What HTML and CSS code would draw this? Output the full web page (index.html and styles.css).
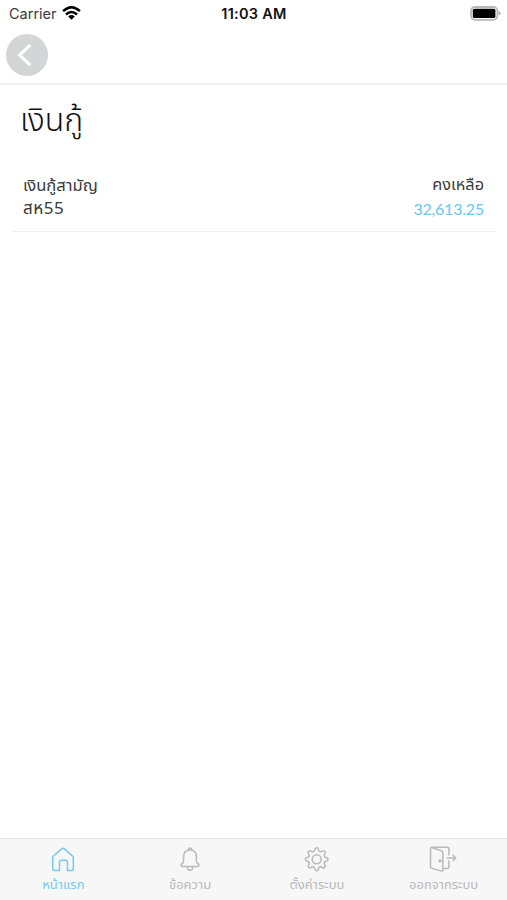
FILE: index.html
```html
<!DOCTYPE html>
<html lang="th">
<head>
<meta charset="utf-8">
<title>เงินกู้</title>
<link rel="stylesheet" href="styles.css">
</head>
<body>
<div class="app">
  <div class="status">
    <div class="carrier"><span>Carrier</span>
      <svg width="19" height="14" viewBox="0 0 19 14" fill="none" stroke="#000" stroke-width="2.5"><path d="M1.1 5.2Q9.5-2.6 17.9 5.2M4 8.5Q9.5 3.6 15 8.5"/><path d="M6.2 10.5Q9.5 7.6 12.8 10.5L9.5 13.8Z" fill="#000" stroke="none"/></svg>
    </div>
    <div class="time">11:03 AM</div>
    <div class="battery"><svg width="31" height="15" viewBox="0 0 31 15"><rect x="1" y="1" width="26.4" height="12.8" rx="4" fill="#fff" stroke="#b8b8b8" stroke-width="1.8"/><rect x="2.8" y="2.7" width="22.6" height="9.3" rx="1.6" fill="#000"/><path d="M28.5 5q2.2 1 2.2 2.3t-2.2 2.3z" fill="#b2b2b2"/></svg></div>
  </div>
  <header class="nav">
    <button class="back" aria-label="ย้อนกลับ"><svg width="42" height="42" viewBox="0 0 42 42" fill="none" stroke="#fff" stroke-width="3.1"><path d="M24.4 10.8 13.5 21l10.9 10.2"/></svg></button>
  </header>
  <main class="content">
    <h1 class="title">เงินกู้</h1>
    <div class="loan">
      <div class="col"><span class="name">เงินกู้สามัญ</span><span class="code">สห55</span></div>
      <div class="col right"><span class="label">คงเหลือ</span><span class="amount">32,613.25</span></div>
    </div>
  </main>
  <nav class="tabs">
    <a class="tab active"><svg width="30" height="28" viewBox="0 0 30 28"><path d="M4.700 10.800 14 2.600q1-.8 2 0l9.300 8.200V23q0 1.500-1.500 1.500h-4.300V16q0-1.800-1.800-1.800h-4.400q-1.800 0-1.800 1.800v8.500H6.200q-1.500 0-1.500-1.500z"/></svg><span>หน้าแรก</span></a>
    <a class="tab"><svg width="30" height="28" viewBox="0 0 30 28"><path d="M8.400 20.600h13.200q2.400 0 2.400-1.400 0-1-1.400-1.700-1.200-.8-1.200-3.200v-3.500Q21.400 4 15 4t-6.400 6.800v3.500q0 2.400-1.200 3.200Q6 18.200 6 19.200q0 1.400 2.400 1.400zM12.200 21q.3 3.200 2.800 3.200t2.800-3.200M13.500 4q-.2-2 1.500-2t1.500 2"/></svg><span>ข้อความ</span></a>
    <a class="tab"><svg width="30" height="28" viewBox="0 0 30 28"><defs><path id="tooth" d="M-3.200-7.700Q-2.200-8-1.900-9.200L-1.600-10.400Q-1.300-11.200-.6-11.200H.6Q1.300-11.200 1.600-10.400L1.900-9.200Q2.200-8 3.200-7.700"/></defs><g transform="translate(14.700 13.300)"><use href="#tooth"/><use href="#tooth" transform="rotate(45)"/><use href="#tooth" transform="rotate(90)"/><use href="#tooth" transform="rotate(135)"/><use href="#tooth" transform="rotate(180)"/><use href="#tooth" transform="rotate(225)"/><use href="#tooth" transform="rotate(270)"/><use href="#tooth" transform="rotate(315)"/><circle r="4.500"/></g></svg><span>ตั้งค่าระบบ</span></a>
    <a class="tab"><svg width="30" height="28" viewBox="0 0 30 28"><path d="M3 1.800 12.300 4.800q1.500.5 1.500 2v16.900q0 1.700-1.700 1.200L3 22.400q-1.500-.4-1.500-1.700V3q0-1.700 1.700-1.700h15q1.700 0 1.700 1.700v6M13.800 22.500h4.400q1.700 0 1.700-1.700V15M18.500 12h8.200M24 9.200l2.800 2.800-2.800 2.800"/><circle cx="11" cy="14.800" r=".9" fill="currentColor"/></svg><span>ออกจากระบบ</span></a>
  </nav>
</div>
</body>
</html>
```
FILE: styles.css
```css
* { box-sizing: border-box; }
body { margin: 0; background: #fff; font-family: "Noto Sans", "Noto Sans Thai", "Liberation Sans", sans-serif; color: #3a3a3a; }
.app { height: 900px; display: flex; flex-direction: column; overflow: hidden; }
.status { height: 28px; display: grid; grid-template-columns: 1fr auto 1fr; align-items: center; padding: 0 6px 2px 9px; font-family: Inter, sans-serif; font-size: 14.5px; }
.carrier { display: flex; align-items: center; gap: 5px; }
.carrier svg { margin-bottom: 1px; }
.time { color: #111; font-weight: 600; letter-spacing: .25px; margin-left: -2px; }
.battery { display: flex; justify-content: flex-end; }
.nav { height: 57px; padding: 6px; border-bottom: 2px solid #f3f3f3; }
.back { display: block; width: 42px; height: 42px; padding: 0; border: 0; border-radius: 50%; background: #d3d5d7; }
.content { flex: 1; padding: 0 11px 0 12px; }
.title { margin: 0; height: 80px; padding: 12px 8px 0; color: #111; font-size: 32px; font-weight: 350; line-height: 44px; }
.loan { height: 67px; display: flex; justify-content: space-between; padding: 8px 12px 0 11px; border-bottom: 1px solid #f0f0f0; }
.col { display: flex; flex-direction: column; font-size: 16.6px; line-height: 23px; white-space: nowrap; }
.code { font-size: 17px; letter-spacing: .5px; }
.right { align-items: flex-end; }
.label { font-size: 16.3px; }
.amount { color: #67c8f2; font-family: Lato, "Noto Sans", sans-serif; font-size: 16px; letter-spacing: -.2px; line-height: 25px; }
.tabs { height: 62px; flex: none; display: grid; grid-template-columns: repeat(4, 1fr); background: #f7f7f7; border-top: 1px solid #e4e4e4; }
.tab { display: flex; flex-direction: column; align-items: center; padding-top: 7px; color: #b9b9b9; font-size: 13px; line-height: 20px; white-space: nowrap; }
.tab svg { fill: none; stroke: currentColor; stroke-width: 1.5; stroke-linejoin: round; stroke-linecap: round; }
.active { color: #73caf1; }
```
